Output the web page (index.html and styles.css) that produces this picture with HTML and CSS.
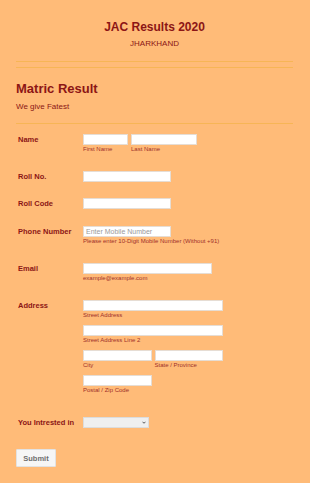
FILE: index.html
```html
<!DOCTYPE html>
<html lang="en">
<head>
    <meta charset="UTF-8">
    <meta name="viewport" content="width=device-width, initial-scale=1.0">
    <title>JAC Results 2020</title>
    <link rel="stylesheet" href="styles.css">
</head>
<body>
    <div class="container">
        <div class="header">
            <h1>JAC Results 2020</h1>
            <p class="subheader">JHARKHAND</p>
        </div>
        <hr class="rule">
        <hr class="rule rule-close">

        <h2>Matric Result</h2>
        <p class="intro">We give Fatest</p>
        <hr class="rule rule-intro">

        <form class="form">
            <div class="row">
                <label class="label">Name</label>
                <div class="field">
                    <div class="split">
                        <div>
                            <input type="text" class="w-first">
                            <span class="sub">First Name</span>
                        </div>
                        <div>
                            <input type="text" class="w-last">
                            <span class="sub">Last Name</span>
                        </div>
                    </div>
                </div>
            </div>

            <div class="row row-tight">
                <label class="label">Roll No.</label>
                <div class="field"><input type="text" class="w-mid"></div>
            </div>

            <div class="row">
                <label class="label">Roll Code</label>
                <div class="field"><input type="text" class="w-mid"></div>
            </div>

            <div class="row">
                <label class="label">Phone Number</label>
                <div class="field">
                    <input type="text" class="w-mid" placeholder="Enter Mobile Number">
                    <span class="sub">Please enter 10-Digit Mobile Number (Without +91)</span>
                </div>
            </div>

            <div class="row">
                <label class="label">Email</label>
                <div class="field">
                    <input type="email" class="w-email">
                    <span class="sub">example@example.com</span>
                </div>
            </div>

            <div class="row row-address">
                <label class="label">Address</label>
                <div class="field">
                    <div class="addr-line">
                        <input type="text" class="w-full">
                        <span class="sub">Street Address</span>
                    </div>
                    <div class="addr-line">
                        <input type="text" class="w-full">
                        <span class="sub">Street Address Line 2</span>
                    </div>
                    <div class="addr-line split">
                        <div>
                            <input type="text" class="w-half">
                            <span class="sub">City</span>
                        </div>
                        <div>
                            <input type="text" class="w-half">
                            <span class="sub">State / Province</span>
                        </div>
                    </div>
                    <div class="addr-line addr-last">
                        <input type="text" class="w-half">
                        <span class="sub">Postal / Zip Code</span>
                    </div>
                </div>
            </div>

            <div class="row row-select">
                <label class="label">You Intrested in</label>
                <div class="field">
                    <div class="select-wrap">
                        <select class="w-select">
                            <option></option>
                        </select>
                        <svg class="chevron" viewBox="0 0 8 5" width="4" height="3">
                            <path d="M1 1 L4 4 L7 1" fill="none" stroke="#333" stroke-width="1.6"/>
                        </svg>
                    </div>
                </div>
            </div>

            <button type="button" class="submit">Submit</button>
        </form>
    </div>
</body>
</html>
```

FILE: styles.css
```css
/* General reset */
* {
    margin: 0;
    padding: 0;
    box-sizing: border-box;
}

body {
    font-family: 'Liberation Sans', Arial, sans-serif;
    background-color: #ffbb78;
    color: #8c1515;
}

.container {
    padding: 19px 17px 0 16px;
}

.header {
    text-align: center;
}

h1 {
    font-size: 12px;
    line-height: 16px;
    font-weight: 700;
}

.subheader {
    font-size: 8px;
    line-height: 11px;
    margin-top: 3px;
}

.rule {
    border: none;
    border-top: 1px solid #f7b556;
    margin-top: 12px;
}

.rule-close {
    margin-top: 5px;
}

h2 {
    font-size: 13px;
    line-height: 16px;
    font-weight: 700;
    margin-top: 13px;
}

.intro {
    font-size: 8px;
    line-height: 11px;
    margin-top: 4px;
}

.rule-intro {
    margin-top: 11px;
}

.form {
    padding-top: 10px;
}

.row {
    display: flex;
    margin-bottom: 17px;
}

.row-tight {
    margin-bottom: 16px;
}

.row-address {
    margin-bottom: 22px;
}

.row-select {
    margin-bottom: 21px;
}

.label {
    width: 67px;
    flex-shrink: 0;
    padding-left: 2px;
    font-size: 7.5px;
    line-height: 11px;
    font-weight: 700;
}

.field {
    display: flex;
    flex-direction: column;
}

.split {
    display: flex;
    gap: 3px;
}

.split > div {
    display: flex;
    flex-direction: column;
}

input, select {
    display: block;
    height: 11px;
    background: #fff;
    border: 1px solid #e6ddd4;
    font-family: 'Liberation Sans', Arial, sans-serif;
    font-size: 7px;
    padding: 0 2px;
    color: #555;
}

input::placeholder {
    color: #9a9a9a;
}

.select-wrap {
    position: relative;
}

select {
    -webkit-appearance: none;
    appearance: none;
    background: #efefef;
    border-color: #dcdcdc;
    border-radius: 0;
}

.chevron {
    position: absolute;
    right: 3px;
    top: 4px;
    pointer-events: none;
}

.w-first { width: 45px; }
.w-last { width: 66px; }
.w-mid { width: 88px; }
.w-email { width: 129px; }
.w-full { width: 140px; }
.w-half { width: 68.5px; }
.w-select { width: 66px; }

.sub {
    display: block;
    font-size: 6px;
    line-height: 9px;
    color: #a0302a;
}

.addr-line {
    margin-bottom: 5px;
}

.addr-last {
    margin-bottom: 0;
}

.submit {
    display: block;
    width: 40px;
    height: 18px;
    background: #f6f6f6;
    border: 1px solid #e2e2e2;
    border-radius: 1px;
    font-family: 'Liberation Sans', Arial, sans-serif;
    font-size: 7.5px;
    font-weight: 700;
    color: #6e6e6e;
}
```
